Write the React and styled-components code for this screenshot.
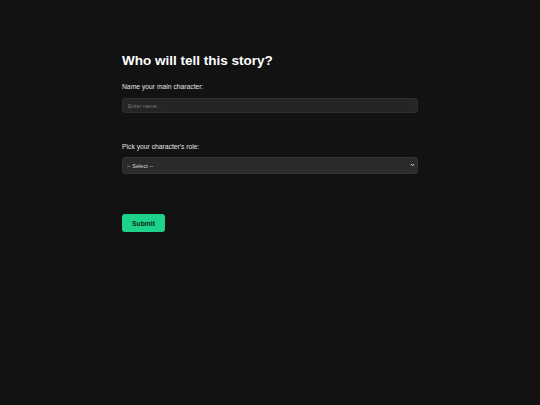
import React from "react";
import styled, { createGlobalStyle } from "styled-components";

const GlobalStyle = createGlobalStyle`
  html, body {
    margin: 0;
    padding: 0;
    background: #121212;
  }
  body {
    font-family: "Liberation Sans", Arial, sans-serif;
    color: #e6e6e6;
  }
`;

const Page = styled.main`
  min-height: 405px;
  display: flex;
  justify-content: center;
  padding-top: 53px;
  box-sizing: border-box;
`;

const Form = styled.form`
  width: 296px;
  display: flex;
  flex-direction: column;
`;

const Title = styled.h1`
  margin: 0 0 15px;
  font-size: 13.5px;
  line-height: 15px;
  font-weight: 700;
  color: #ffffff;
`;

const Field = styled.div`
  display: flex;
  flex-direction: column;
  margin-bottom: ${(p) => p.$gap}px;
`;

const Label = styled.label`
  font-size: 6.75px;
  line-height: 8px;
  color: #e4e4e4;
  margin-bottom: ${(p) => p.$gap}px;
`;

const Input = styled.input`
  height: 15px;
  box-sizing: border-box;
  padding: 0 5px;
  background: #252525;
  border: 1px solid #2e2e2e;
  border-radius: 3px;
  color: #ddd;
  font-family: "Liberation Sans", Arial, sans-serif;
  font-size: 5.6px;
  outline: none;

  &::placeholder {
    color: #777;
  }
`;

const SelectWrap = styled.div`
  position: relative;
  display: flex;
`;

const Select = styled.select`
  flex: 1;
  height: 17px;
  box-sizing: border-box;
  padding: 0 12px 0 4px;
  appearance: none;
  background: #2a2a2a;
  border: 1px solid #333;
  border-radius: 3px;
  color: #d8d8d8;
  font-family: "Liberation Sans", Arial, sans-serif;
  font-size: 5.6px;
  outline: none;
`;

const Chevron = styled.svg`
  position: absolute;
  right: 3px;
  top: 6px;
  width: 5px;
  height: 4px;
  pointer-events: none;
`;

const Button = styled.button`
  align-self: flex-start;
  width: 43px;
  height: 18px;
  padding: 0;
  background: #1ed28a;
  border: none;
  border-radius: 3px;
  color: #0b2a1c;
  font-family: "Liberation Sans", Arial, sans-serif;
  font-size: 6.75px;
  font-weight: 700;
  cursor: pointer;
`;

export default function App() {
  return (
    <>
      <GlobalStyle />
      <Page>
        <Form onSubmit={(e) => e.preventDefault()}>
          <Title>Who will tell this story?</Title>
          <Field $gap={30}>
            <Label $gap={7}>Name your main character:</Label>
            <Input placeholder="Enter name..." />
          </Field>
          <Field $gap={40}>
            <Label $gap={6}>Pick your character's role:</Label>
            <SelectWrap>
              <Select defaultValue="">
                <option value="">-- Select --</option>
                <option value="hero">Hero</option>
                <option value="villain">Villain</option>
                <option value="narrator">Narrator</option>
              </Select>
              <Chevron viewBox="0 0 10 8">
                <path d="M1.5 2 L5 5.5 L8.5 2" fill="none" stroke="#e6e6e6" strokeWidth="2" />
              </Chevron>
            </SelectWrap>
          </Field>
          <Button type="submit">Submit</Button>
        </Form>
      </Page>
    </>
  );
}
